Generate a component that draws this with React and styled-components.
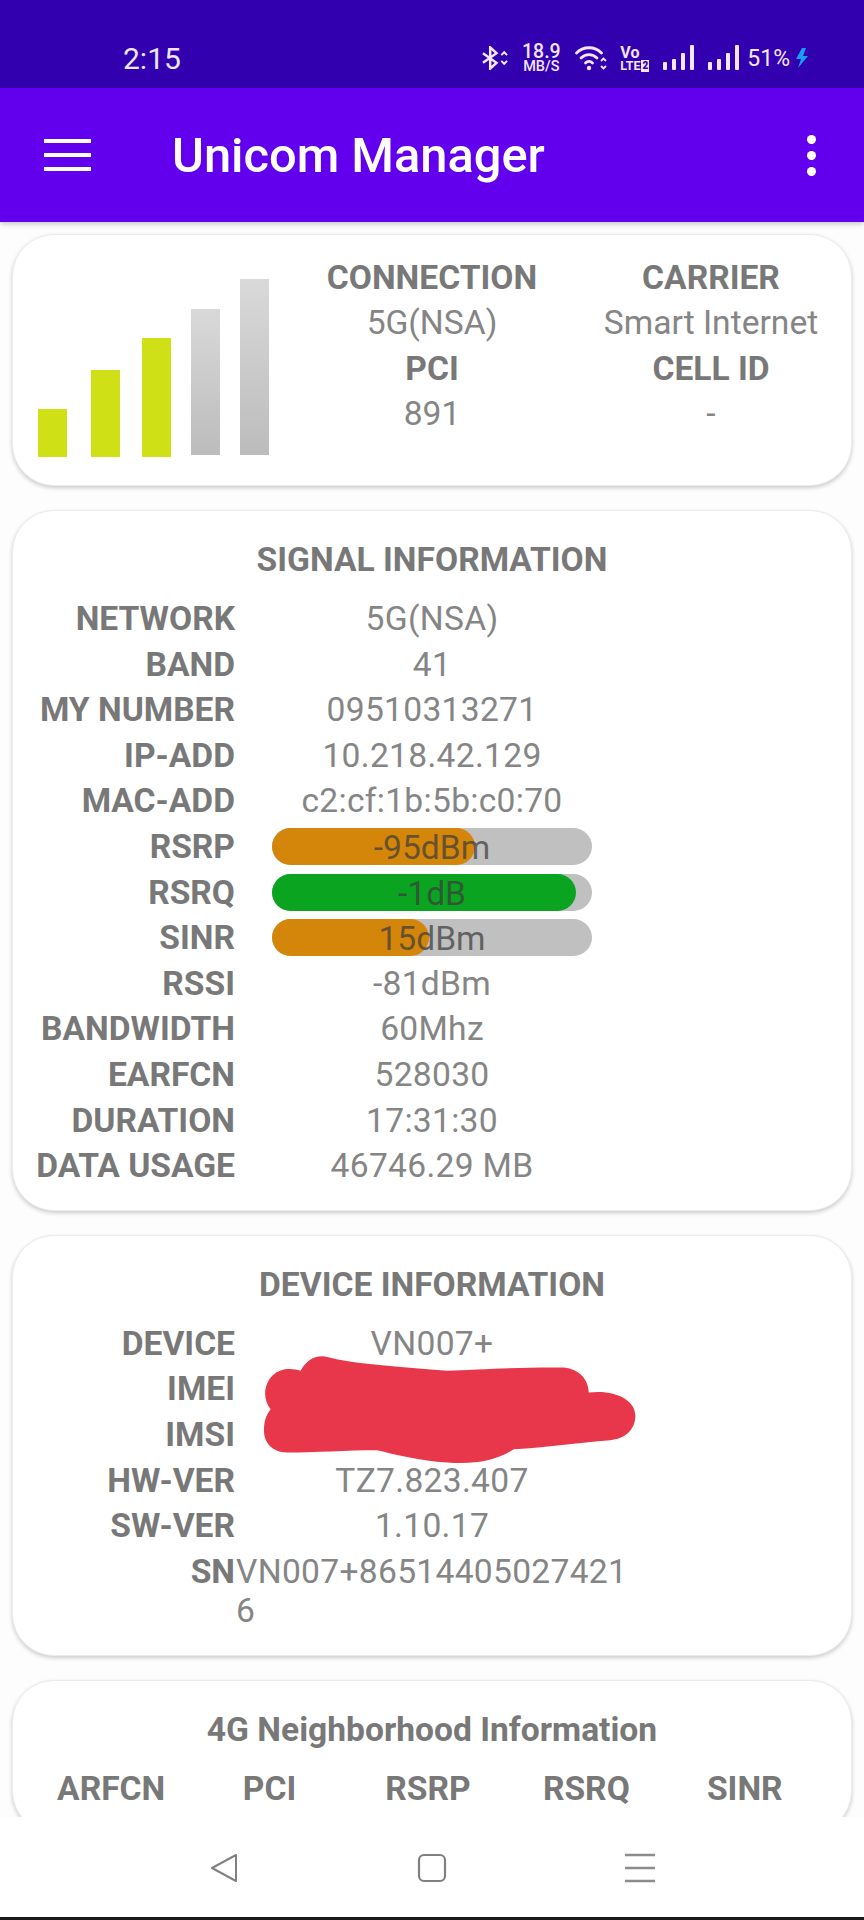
import React from "react";
import styled, { createGlobalStyle } from "styled-components";

const GlobalStyle = createGlobalStyle`
  html, body {
    margin: 0;
    padding: 0;
    background: #ffffff;
  }
  * {
    box-sizing: border-box;
  }
`;

const Screen = styled.div`
  width: 864px;
  height: 1920px;
  display: flex;
  flex-direction: column;
  overflow: hidden;
  background: #fdfdfd;
  font-family: Roboto, "Liberation Sans", sans-serif;
`;

const StatusBar = styled.div`
  height: 88px;
  flex-shrink: 0;
  background: #3200ae;
  display: flex;
  align-items: center;
  justify-content: space-between;
  padding: 28px 55px 0 123px;
  color: #f3e6ff;
`;

const Clock = styled.span`
  font-size: 30px;
  color: #efe6fb;
`;

const StatusIcons = styled.div`
  display: flex;
  align-items: center;
`;

const Speed = styled.div`
  display: flex;
  flex-direction: column;
  align-items: center;
  width: 36px;
  margin: 0 16px 0 14px;
  font-weight: 500;
  font-size: 19.500px;
  line-height: 17px;
  white-space: nowrap;
  small {
    font-size: 14.500px;
    line-height: 13px;
  }
`;

const Volte = styled.div`
  display: flex;
  flex-direction: column;
  align-items: flex-start;
  width: 31px;
  margin: 0 12px 0 13px;
  font-weight: 700;
  font-size: 16px;
  line-height: 15px;
  small {
    display: flex;
    gap: 1px;
    font-size: 12.500px;
    line-height: 12px;
    white-space: nowrap;
  }
  b {
    padding: 0 1px;
    font-size: 10px;
    color: #3200ae;
    background: #f3e6ff;
  }
`;

const Battery = styled.span`
  font-size: 23px;
  margin: 0 5px 0 8px;
`;

const CellGap = styled.span`
  width: 14px;
`;

const AppBar = styled.header`
  height: 134px;
  flex-shrink: 0;
  background: #6200ee;
  display: flex;
  align-items: center;
  padding: 0 44px;
  position: relative;
  z-index: 2;
  box-shadow: 0 2px 5px rgba(0, 0, 0, 0.22);
`;

const Burger = styled.div`
  width: 47px;
  display: flex;
  flex-direction: column;
  gap: 10px;
  span {
    height: 4px;
    background: #ffffff;
  }
`;

const AppTitle = styled.h1`
  flex: 1;
  margin: 0 0 0 81px;
  font-size: 48.800px;
  font-weight: 500;
  color: #ffffff;
`;

const Dots = styled.div`
  display: flex;
  flex-direction: column;
  gap: 7px;
  margin-right: 4px;
  span {
    width: 9px;
    height: 9px;
    border-radius: 50%;
    background: #ffffff;
  }
`;

const Content = styled.main`
  flex: 1;
  min-height: 0;
  overflow: hidden;
  padding: 12px 12px 0;
  display: flex;
  flex-direction: column;
  gap: 24px;
`;

const Card = styled.section`
  position: relative;
  flex-shrink: 0;
  background: #ffffff;
  border: 1px solid #ececec;
  border-radius: 42px;
  box-shadow: 0 2px 4px rgba(0, 0, 0, 0.2);
  padding: 26px 0 21px;
`;

const OverviewCard = styled(Card)`
  height: 252px;
  padding: 20px 0 0 25px;
  display: flex;
  align-items: flex-start;
`;

const OverviewBars = styled.div`
  flex-shrink: 0;
  margin-top: 24px;
  line-height: 0;
`;

const OverviewGrid = styled.div`
  display: grid;
  grid-template-columns: 292px 266px;
  align-content: start;
  margin-left: 17px;
  text-align: center;
`;

const Heading = styled.div`
  font-size: 33.600px;
  line-height: 45.400px;
  font-weight: 700;
  color: #787878;
`;

const Plain = styled.div`
  font-size: 33.600px;
  line-height: 45.400px;
  color: #858585;
`;

const CardTitle = styled.h2`
  margin: 0 0 13px;
  font-size: 33.600px;
  line-height: 46px;
  font-weight: 700;
  color: #787878;
  text-align: center;
`;

const Row = styled.div`
  display: flex;
  align-items: flex-start;
  min-height: 45.600px;
  padding: 3px 0;
`;

const RowLabel = styled.div`
  width: 222px;
  flex-shrink: 0;
  text-align: right;
  font-size: 33.600px;
  line-height: 39.500px;
  font-weight: 700;
  color: #787878;
`;

const RowValue = styled.div`
  width: 392px;
  margin-left: 1px;
  text-align: ${({ $left }) => ($left ? "left" : "center")};
  font-size: 33.600px;
  line-height: 39.500px;
  letter-spacing: 0.300px;
  color: #858585;
  word-break: break-all;
`;

const Meter = styled.div`
  position: relative;
  width: 320px;
  height: 37px;
  margin: 1px 0 0 37px;
  border-radius: 19px;
  background: #c0c0c0;
  text-align: center;
  font-size: 33.600px;
  line-height: 39px;
  color: rgba(60, 60, 60, 0.72);
`;

const MeterFill = styled.div`
  position: absolute;
  left: 0;
  top: 0;
  bottom: 0;
  border-radius: 19px;
  background: ${({ $color }) => $color};
`;

const MeterText = styled.span`
  position: relative;
`;

const Scribble = styled.svg`
  position: absolute;
  left: 251px;
  top: 118px;
`;

const NeighborGrid = styled.div`
  display: grid;
  grid-template-columns: repeat(5, 158.400px);
  padding-left: 19px;
  text-align: center;
`;

const NavBar = styled.nav`
  height: 103px;
  flex-shrink: 0;
  position: relative;
  z-index: 2;
  background: #ffffff;
  display: flex;
  align-items: flex-start;
  justify-content: center;
  gap: 178px;
  padding-top: 36px;
  border-bottom: 3px solid #1a1a1a;
`;

const signalRows = [
  ["NETWORK", "5G(NSA)"],
  ["BAND", "41"],
  ["MY NUMBER", "09510313271"],
  ["IP-ADD", "10.218.42.129"],
  ["MAC-ADD", "c2:cf:1b:5b:c0:70"],
  ["RSRP", "-95dBm", 63.5, "#d4860b"],
  ["RSRQ", "-1dB", 95, "#0ba420"],
  ["SINR", "15dBm", 49, "#d4860b"],
  ["RSSI", "-81dBm"],
  ["BANDWIDTH", "60Mhz"],
  ["EARFCN", "528030"],
  ["DURATION", "17:31:30"],
  ["DATA USAGE", "46746.29 MB"],
];

const deviceRows = [
  ["DEVICE", "VN007+"],
  ["IMEI", ""],
  ["IMSI", ""],
  ["HW-VER", "TZ7.823.407"],
  ["SW-VER", "1.10.17"],
];

const BluetoothIcon = () => (
  <svg width="27" height="24" viewBox="0 0 28 24" fill="none" stroke="#f3e6ff" strokeWidth="2.600">
    <path d="M1 7l14 10-6.500 6V1L15 7 1 17" />
    <path d="M20 9l3-3 3 3M20 15l3 3 3-3" strokeWidth="2" />
  </svg>
);

const WifiIcon = () => (
  <svg width="32" height="26" viewBox="0 0 32 26" fill="none" stroke="#f3e6ff" strokeWidth="2.800" strokeLinecap="round">
    <path d="M1.500 8C8 1 20 1 26.500 8" />
    <path d="M6 13c4.500-4.500 11.500-4.500 16 0" />
    <path d="M10.500 18c2-2 5-2 7 0" />
    <circle cx="14" cy="23" r="2.200" fill="#f3e6ff" stroke="none" />
    <path d="M26 16l2.500-2.500L31 16M26 21l2.500 2.500L31 21" strokeWidth="1.800" strokeLinecap="butt" />
  </svg>
);

const CellIcon = () => (
  <svg width="31" height="26" viewBox="0 0 31 26" fill="#f3e6ff">
    <rect x="0" y="17" width="4" height="8" rx="1" />
    <rect x="9" y="14" width="4" height="11" rx="1" />
    <rect x="18" y="8" width="4" height="17" rx="1" />
    <rect x="27" y="0" width="4" height="25" rx="1" />
  </svg>
);

const BoltIcon = () => (
  <svg width="14" height="20" viewBox="0 0 14 20" fill="#1a9cf0">
    <path d="M7 0L1 11h5l-3 9 10-12H8l3-8z" />
  </svg>
);

const SignalBars = () => (
  <svg width="231" height="178" viewBox="0 0 231 178">
    <defs>
      <linearGradient id="idle" x1="0" y1="0" x2="0" y2="1">
        <stop offset="0" stopColor="#d9d9d9" />
        <stop offset="1" stopColor="#bcbcbc" />
      </linearGradient>
    </defs>
    <rect x="0" y="130" width="29" height="48" fill="#cfe017" />
    <rect x="53" y="91" width="29" height="87" fill="#cfe017" />
    <rect x="104" y="59" width="29" height="119" fill="#cfe017" />
    <rect x="153" y="30" width="29" height="146" fill="url(#idle)" />
    <rect x="202" y="0" width="29" height="176" fill="url(#idle)" />
  </svg>
);

const BackIcon = () => (
  <svg width="30" height="30" viewBox="0 0 30 30" fill="none" stroke="#808080" strokeWidth="2" strokeLinejoin="round">
    <path d="M27 2L3 15l24 13z" />
  </svg>
);

const HomeIcon = () => (
  <svg width="30" height="30" viewBox="0 0 30 30" fill="none" stroke="#808080" strokeWidth="2.200">
    <rect x="2" y="2" width="26" height="26" rx="5" />
  </svg>
);

const MenuIcon = () => (
  <svg width="30" height="30" viewBox="0 0 30 30" fill="none" stroke="#8c8c8c" strokeWidth="2.400">
    <path d="M0 2h30M0 15h30M0 28h30" />
  </svg>
);

const renderRow = ([label, value, percent, color]) => (
  <Row key={label}>
    <RowLabel>{label}</RowLabel>
    {percent ? (
      <Meter>
        <MeterFill $color={color} style={{ width: `${percent}%` }} />
        <MeterText>{value}</MeterText>
      </Meter>
    ) : (
      <RowValue>{value}</RowValue>
    )}
  </Row>
);

const App = () => {
  return (
    <Screen>
      <GlobalStyle />
      <StatusBar>
        <Clock>2:15</Clock>
        <StatusIcons>
          <BluetoothIcon />
          <Speed>
            <span>18.9</span>
            <small>MB/S</small>
          </Speed>
          <WifiIcon />
          <Volte>
            <span>Vo</span>
            <small>
              LTE<b>2</b>
            </small>
          </Volte>
          <CellIcon />
          <CellGap />
          <CellIcon />
          <Battery>51%</Battery>
          <BoltIcon />
        </StatusIcons>
      </StatusBar>

      <AppBar>
        <Burger>
          <span />
          <span />
          <span />
        </Burger>
        <AppTitle>Unicom Manager</AppTitle>
        <Dots>
          <span />
          <span />
          <span />
        </Dots>
      </AppBar>

      <Content>
        <OverviewCard>
          <OverviewBars>
            <SignalBars />
          </OverviewBars>
          <OverviewGrid>
            <Heading>CONNECTION</Heading>
            <Heading>CARRIER</Heading>
            <Plain>5G(NSA)</Plain>
            <Plain>Smart Internet</Plain>
            <Heading>PCI</Heading>
            <Heading>CELL ID</Heading>
            <Plain>891</Plain>
            <Plain>-</Plain>
          </OverviewGrid>
        </OverviewCard>

        <Card>
          <CardTitle>SIGNAL INFORMATION</CardTitle>
          {signalRows.map(renderRow)}
        </Card>

        <Card>
          <CardTitle>DEVICE INFORMATION</CardTitle>
          {deviceRows.map(renderRow)}
          <Row>
            <RowLabel>SN</RowLabel>
            <RowValue $left>VN007+865144050274216</RowValue>
          </Row>
          <Scribble width="373" height="112" viewBox="250 100 1120 335">
            <path
              fill="#e8364a"
              d="M270 265C245 235 250 190 275 165C300 140 335 142 360 150C375 120 405 100 440 108C520 130 640 135 800 150C900 145 1050 138 1150 140C1200 145 1225 180 1225 215C1300 205 1365 235 1365 285C1365 330 1330 355 1290 358C1190 365 1100 380 1000 385C950 420 880 432 800 425C720 420 640 400 590 388C500 388 400 395 320 395C270 395 248 360 250 325C250 300 258 280 270 265Z"
            />
          </Scribble>
        </Card>

        <Card>
          <CardTitle>4G Neighborhood Information</CardTitle>
          <NeighborGrid>
            <Heading>ARFCN</Heading>
            <Heading>PCI</Heading>
            <Heading>RSRP</Heading>
            <Heading>RSRQ</Heading>
            <Heading>SINR</Heading>
          </NeighborGrid>
        </Card>
      </Content>

      <NavBar>
        <BackIcon />
        <HomeIcon />
        <MenuIcon />
      </NavBar>
    </Screen>
  );
};

export default App;
